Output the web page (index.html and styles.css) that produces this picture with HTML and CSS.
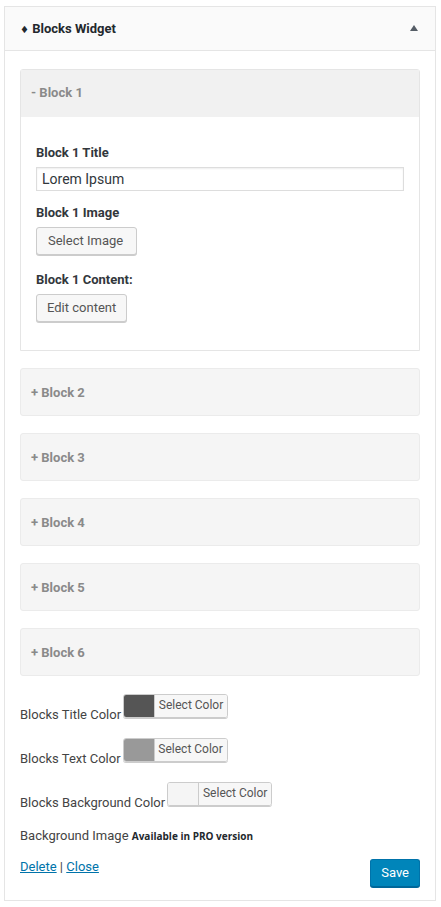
FILE: index.html
```html
<!DOCTYPE html>
<html>
<head>
<meta charset="utf-8">
<link rel="stylesheet" href="styles.css">
</head>
<body>
<div class="widget">
  <div class="widget-top">
    <div class="widget-title"><span class="diamond">&#9830;</span> Blocks Widget</div>
    <svg class="toggle" width="8" height="6" viewBox="0 0 8 6"><polygon points="4,0 8,6 0,6" fill="#555d66"/></svg>
  </div>
  <div class="widget-inside">
    <div class="block open">
      <div class="block-head">- Block 1</div>
      <div class="block-body">
        <div class="field-label first">Block 1 Title</div>
        <input class="text-input" type="text" value="Lorem Ipsum">
        <div class="field-label">Block 1 Image</div>
        <button class="btn btn-wide">Select Image</button>
        <div class="field-label gap">Block 1 Content:</div>
        <button class="btn">Edit content</button>
      </div>
    </div>
    <div class="block"><div class="block-head">+ Block 2</div></div>
    <div class="block"><div class="block-head">+ Block 3</div></div>
    <div class="block"><div class="block-head">+ Block 4</div></div>
    <div class="block"><div class="block-head">+ Block 5</div></div>
    <div class="block"><div class="block-head">+ Block 6</div></div>

    <div class="color-row first-row">
      <span class="color-label">Blocks Title Color</span>
      <span class="color-btn"><span class="swatch sw-dark"></span><span class="color-text">Select Color</span></span>
    </div>
    <div class="color-row">
      <span class="color-label">Blocks Text Color</span>
      <span class="color-btn"><span class="swatch sw-mid"></span><span class="color-text">Select Color</span></span>
    </div>
    <div class="color-row">
      <span class="color-label">Blocks Background Color</span>
      <span class="color-btn"><span class="swatch sw-light"></span><span class="color-text">Select Color</span></span>
    </div>
    <div class="bg-image">Background Image <strong class="pro">Available in PRO version</strong></div>
    <div class="footer">
      <div class="links"><a href="#">Delete</a> | <a href="#">Close</a></div>
      <button class="save">Save</button>
    </div>
  </div>
</div>
</body>
</html>
```
FILE: styles.css
```css
html, body {
  margin: 0;
  padding: 0;
  background: #fff;
}
body {
  font-family: Roboto, "Liberation Sans", sans-serif;
  color: #444;
  padding-top: 6px;
}
.widget {
  margin-left: 4px;
  width: 432px;
  box-sizing: border-box;
  border: 1px solid #e5e5e5;
  background: #fff;
}
.widget-top {
  height: 43px;
  background: #fafafa;
  border-bottom: 1px solid #e5e5e5;
  display: flex;
  align-items: center;
  justify-content: space-between;
  padding: 0 17px 0 15px;
}
.widget-title {
  font-size: 13px;
  font-weight: bold;
  color: #23282d;
}
.diamond {
  font-family: "DejaVu Sans", sans-serif;
  font-size: 10px;
}
.toggle {
  display: block;
  margin-top: -1px;
}
.widget-inside {
  padding: 18px 15px 13px;
}
.block {
  border: 1px solid #ebebeb;
  border-radius: 3px;
  background: #f5f5f5;
  margin-top: 17px;
}
.block.open {
  margin-top: 0;
  border-color: #e5e5e5;
  background: #fff;
  border-radius: 3px 3px 0 0;
}
.block-head {
  height: 46px;
  display: flex;
  align-items: center;
  padding-left: 10px;
  font-size: 13px;
  font-weight: bold;
  color: #8a8a8a;
}
.block.open .block-head {
  height: 47px;
  background: #f1f1f1;
  padding-bottom: 2px;
  box-sizing: border-box;
}
.block-body {
  padding: 26px 15px 28px;
  display: flex;
  flex-direction: column;
  align-items: flex-start;
}
.field-label {
  font-size: 13px;
  font-weight: bold;
  color: #32373c;
  line-height: 18px;
  margin-top: 13px;
  margin-bottom: 5px;
}
.field-label.first {
  margin-top: 1px;
  margin-bottom: 5px;
}
.field-label.gap {
  margin-top: 16px;
}
.text-input {
  width: 368px;
  height: 24px;
  box-sizing: border-box;
  border: 1px solid #ddd;
  box-shadow: inset 0 1px 2px rgba(0,0,0,.07);
  padding: 0 5px;
  font-family: Roboto, "Liberation Sans", sans-serif;
  font-size: 14px;
  color: #32373c;
  margin: 0;
  outline: none;
}
.btn {
  height: 28px;
  box-sizing: border-box;
  border: 1px solid #ccc;
  border-radius: 3px;
  background: #f7f7f7;
  box-shadow: 0 1px 0 #ccc;
  padding: 0 10px;
  font-family: Roboto, "Liberation Sans", sans-serif;
  font-size: 13px;
  color: #555;
  line-height: 26px;
  margin: 0;
}
.btn-wide {
  padding: 0 13px 0 11px;
}
.color-row {
  display: flex;
  align-items: flex-end;
  margin-top: 15px;
}
.color-row.first-row {
  margin-top: 18px;
}
.color-label {
  font-size: 13px;
  line-height: 16px;
  color: #444;
}
.color-btn {
  display: flex;
  width: 105px;
  height: 24px;
  box-sizing: border-box;
  margin-left: 2px;
  margin-bottom: 5px;
  border: 1px solid #ccc;
  border-radius: 3px;
  box-shadow: 0 1px 0 #ccc;
  overflow: hidden;
}
.swatch {
  width: 30px;
  flex: none;
}
.sw-dark { background: #555555; }
.sw-mid { background: #999999; }
.sw-light { background: #f5f5f5; }
.color-text {
  flex: 1;
  border-left: 1px solid #ccc;
  background: #f7f7f7;
  font-size: 12px;
  line-height: 21px;
  color: #555;
  text-align: center;
}
.bg-image {
  margin-top: 17px;
  font-size: 13px;
  line-height: 16px;
  color: #444;
}
.pro {
  font-family: "Open Sans", sans-serif;
  font-size: 10px;
  color: #23282d;
}
.footer {
  margin-top: 15px;
  display: flex;
  justify-content: space-between;
  align-items: flex-start;
}
.links {
  font-size: 13px;
  line-height: 16px;
  color: #444;
}
.links a {
  color: #0073aa;
  text-decoration: underline;
}
.save {
  height: 28px;
  box-sizing: border-box;
  padding: 0 10px;
  margin: 0;
  border: 1px solid #0073aa;
  border-bottom-color: #006799;
  border-radius: 3px;
  background: #0085ba;
  box-shadow: 0 1px 0 #006799;
  color: #fff;
  font-family: Roboto, "Liberation Sans", sans-serif;
  font-size: 13px;
  line-height: 26px;
}
```
